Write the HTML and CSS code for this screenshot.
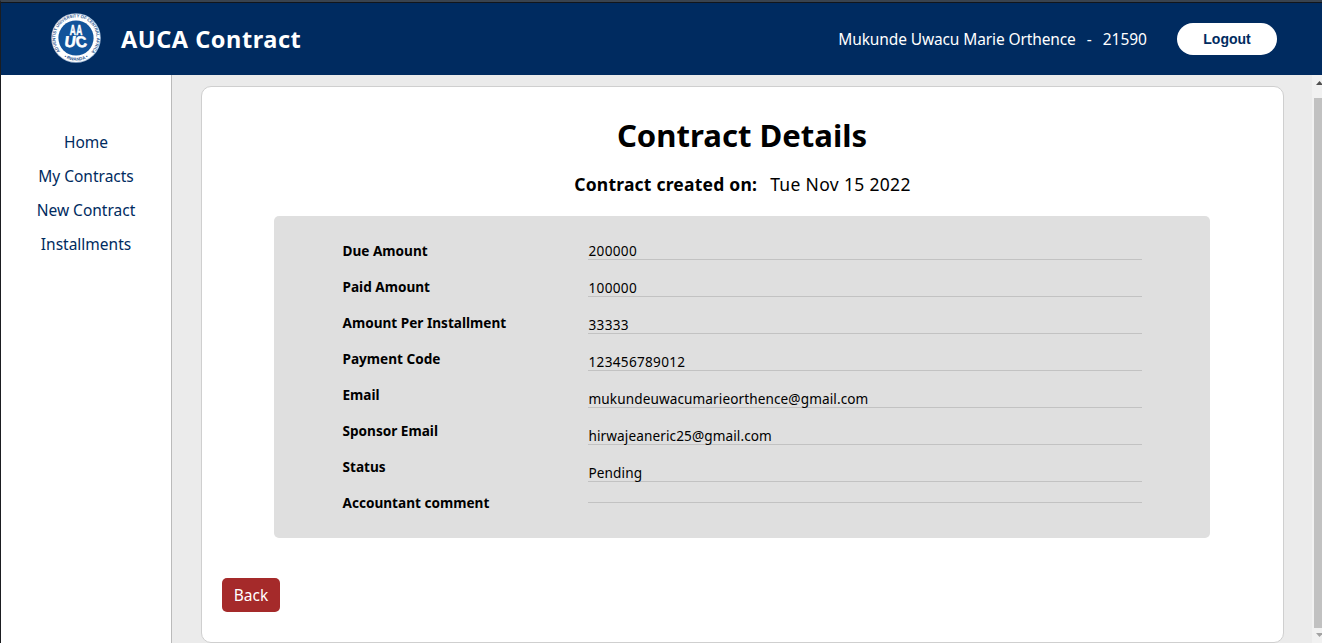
FILE: index.html
```
<!DOCTYPE html>
<html lang="en">
<head>
<meta charset="utf-8">
<title>AUCA Contract</title>
<link rel="stylesheet" href="styles.css">
</head>
<body>
<div class="window">
  <header class="header">
    <div class="brand">
      <svg class="logo" width="50" height="50" viewBox="0 0 50 50" role="img" aria-label="AUCA">
        <defs>
          <path id="ring-top" d="M9.2 38.2A20.6 20.6 0 1 1 40.8 38.2"/>
          <path id="ring-bottom" d="M12 43.5A22.6 22.6 0 0 0 38 43.5"/>
        </defs>
        <circle cx="25" cy="25" r="24.8" fill="#a9bfd9"/>
        <circle cx="25" cy="25" r="24" fill="#fff"/>
        <circle cx="25" cy="25" r="17.6" fill="#11539a"/>
        <g class="ring-text" fill="#2c568f">
          <text><textPath href="#ring-top" textLength="94" lengthAdjust="spacingAndGlyphs">ADVENTIST UNIVERSITY OF CENTRAL AFRICA</textPath></text>
          <text><textPath href="#ring-bottom" startOffset="50%" text-anchor="middle">• RWANDA •</textPath></text>
        </g>
        <g class="logo-letters" fill="#fff" stroke="#fff" stroke-width="0.6">
          <text transform="translate(18.7 22) scale(0.56 1)" font-size="15">A</text>
          <text transform="translate(25.2 22) scale(0.56 1)" font-size="15">A</text>
          <text transform="translate(13 34.2) skewX(-8) scale(0.98 1)" font-size="15.5">U</text>
          <text transform="translate(25.6 34.2) skewX(8) scale(0.98 1)" font-size="15.5">C</text>
        </g>
      </svg>
      <span class="brand-name">AUCA Contract</span>
    </div>
    <div class="account">
      <div class="user"><span class="user-name">Mukunde Uwacu Marie Orthence</span><span>-</span><span>21590</span></div>
      <button class="logout">Logout</button>
    </div>
  </header>
  <div class="body">
    <nav class="sidebar">
      <a>Home</a>
      <a>My Contracts</a>
      <a>New Contract</a>
      <a>Installments</a>
    </nav>
    <main class="content">
      <section class="card">
        <h1 class="title">Contract Details</h1>
        <p class="created"><strong class="created-label">Contract created on:</strong><span class="created-date">Tue Nov 15 2022</span></p>
        <div class="details">
          <div class="labels">
            <span>Due Amount</span>
            <span>Paid Amount</span>
            <span>Amount Per Installment</span>
            <span>Payment Code</span>
            <span>Email</span>
            <span>Sponsor Email</span>
            <span>Status</span>
            <span>Accountant comment</span>
          </div>
          <div class="values">
            <p class="number">200000</p>
            <p class="number">100000</p>
            <p class="number">33333</p>
            <p class="number">123456789012</p>
            <p>mukundeuwacumarieorthence@gmail.com</p>
            <p>hirwajeaneric25@gmail.com</p>
            <p>Pending</p>
            <p></p>
          </div>
        </div>
        <button class="back">Back</button>
      </section>
    </main>
    <div class="scrollbar">
      <svg class="arrow" width="6" height="4" viewBox="0 0 6 4"><path d="M3.5 0L7 4H0z" fill="#505050"/></svg>
      <div class="thumb"></div>
      <svg class="arrow" width="6" height="4" viewBox="0 0 6 4"><path d="M0 0H7L3.5 4z" fill="#a3a3a3"/></svg>
    </div>
  </div>
</div>
</body>
</html>
```
FILE: styles.css
```
* { box-sizing: border-box; }
body {
  margin: 0;
  height: 643px;
  overflow: hidden;
  font-family: "Noto Sans", sans-serif;
  font-size: 15.5px;
  color: #000;
}
p, h1 { margin: 0; }
.window {
  height: 643px;
  display: flex;
  flex-direction: column;
  border-left: 1px solid #1b1d21;
  border-top: 2px solid #39434f;
}
.header {
  height: 73px;
  flex: none;
  display: flex;
  justify-content: space-between;
  align-items: center;
  padding: 0 45px 0 50px;
  background: #002b60;
  border-top: 1px solid #12161c;
  color: #fff;
}
.brand { display: flex; align-items: center; gap: 20px; }
.logo { display: block; margin-bottom: 3px; }
.ring-text { font: bold 4.4px "Liberation Sans", sans-serif; }
.logo-letters { font-family: "Liberation Sans", sans-serif; font-weight: bold; }
.brand-name { font-size: 23.5px; font-weight: 700; line-height: 30px; letter-spacing: 0.55px; margin-bottom: 1px; }
.account { display: flex; align-items: center; gap: 30px; }
.user { display: flex; gap: 11px; line-height: 22px; }
.user-name { letter-spacing: -0.12px; }
.logout {
  width: 100px;
  height: 32px;
  padding: 0;
  border: 0;
  border-radius: 16px;
  background: #fff;
  color: #002b60;
  font: bold 14px "Liberation Sans", Arial, sans-serif;
}
.body { flex: 1; min-height: 0; display: flex; }
.sidebar {
  width: 171px;
  flex: none;
  display: flex;
  flex-direction: column;
  align-items: center;
  gap: 16px;
  padding-top: 58px;
  border-right: 1px solid #bababa;
  background: #fff;
  color: #002b60;
  line-height: 18px;
}
.content {
  flex: 1;
  padding: 11px 28px 0 29px;
  background: #ebebeb;
}
.card {
  height: 557px;
  padding: 28px 20px 0;
  border: 1px solid #cfcfcf;
  border-radius: 10px;
  background: #fff;
}
.title { padding-right: 1px; text-align: center; font-size: 31.1px; line-height: 40px; font-weight: 700; }
.created {
  display: flex;
  justify-content: center;
  gap: 13px;
  margin-top: 17px;
  font-size: 17.5px;
  line-height: 24px;
}
.created-label { letter-spacing: 0.22px; }
.created-date { letter-spacing: 0.33px; }
.details {
  display: flex;
  height: 322px;
  margin: 20px 53px 0 52px;
  padding: 23px 68px;
  border-radius: 5px;
  background: #dfdfdf;
  font-size: 13.6px;
}
.labels {
  width: 246px;
  flex: none;
  display: flex;
  flex-direction: column;
  gap: 16px;
  padding: 2px 0 0 0.5px;
  font-weight: 700;
  line-height: 20px;
}
.values { flex: 1; display: flex; flex-direction: column; gap: 16px; line-height: 16px; letter-spacing: 0.1px; }
.values p { padding: 4px 0 0 0.5px; border-bottom: 1px solid #c2c2c2; }
.values .number { letter-spacing: 0.3px; }
.back {
  display: block;
  width: 58px;
  height: 34px;
  margin-top: 40px;
  padding: 0;
  border: 0;
  border-radius: 5px;
  background: #a52a2a;
  color: #fff;
  font: 15.5px/34px "Noto Sans", sans-serif;
}
.scrollbar {
  width: 10px;
  flex: none;
  display: flex;
  flex-direction: column;
  justify-content: space-between;
  padding: 6px 0 6px 2px;
  background: #f1f1f1;
}
.arrow { display: block; margin-left: 2px; }
.thumb { height: 530px; margin-top: 8px; background: #c1c1c1; }
```
